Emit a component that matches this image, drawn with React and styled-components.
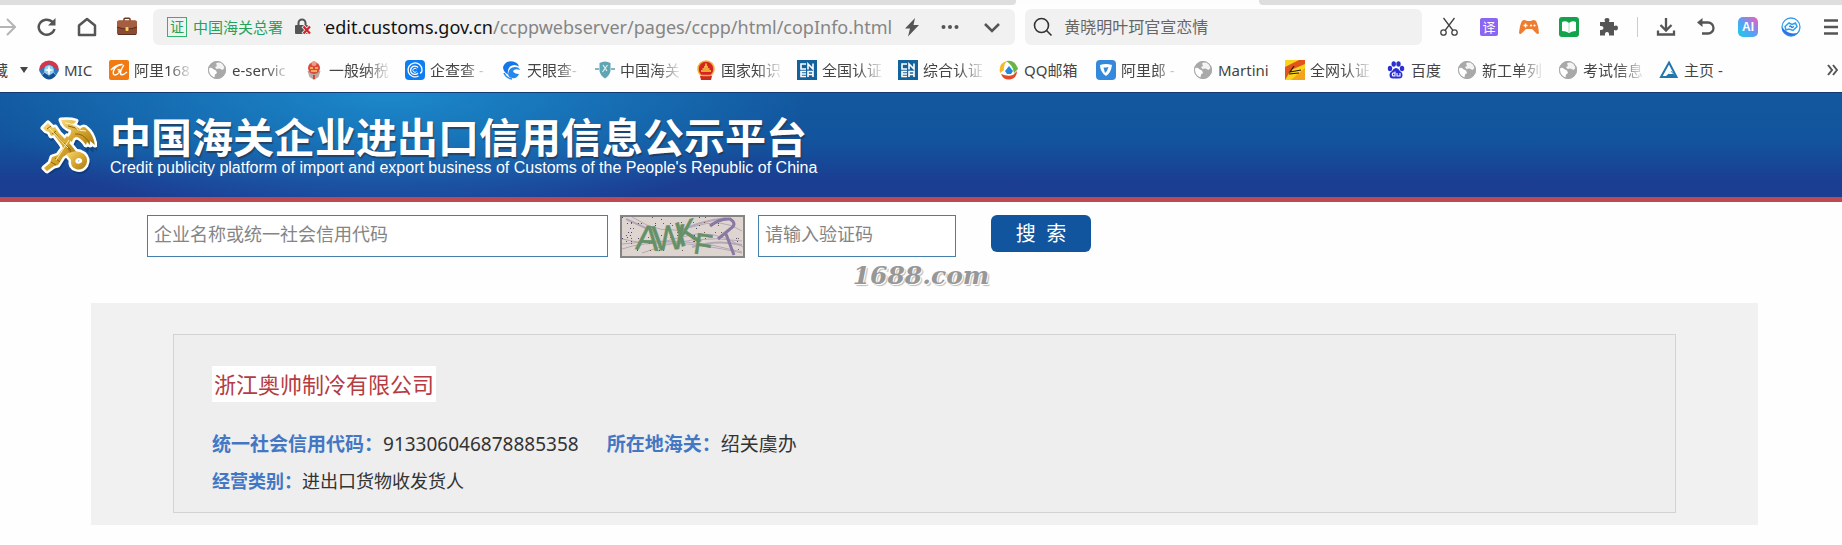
import React from "react";
import styled, { createGlobalStyle } from "styled-components";

const GlobalStyle = createGlobalStyle`
  * { box-sizing: border-box; }
  body {
    margin: 0;
    background: #fefefe;
    color: #333;
    font-family: "Noto Sans", "Noto Sans CJK SC", sans-serif;
    overflow-x: hidden;
  }
  svg { display: block; flex: none; }
`;

/* ---------- browser chrome ---------- */

const TabStrip = styled.div`
  display: flex;
  height: 5px;
  background: #fdfdfd;
`;
const TabEdge = styled.div`
  flex: ${(p) => p.$grow} 1 0;
  background: #dedede;
  border-radius: ${(p) => (p.$side === "left" ? "0 0 4px 0" : "0 0 0 4px")};
`;
const ActiveTab = styled.div`
  flex: 243 1 0;
`;

const Toolbar = styled.div`
  display: flex;
  align-items: center;
  height: 44px;
`;
const IconButton = styled.button`
  flex: none;
  display: flex;
  align-items: center;
  justify-content: ${(p) => p.$align || "center"};
  width: ${(p) => p.$width || 40}px;
  height: 36px;
  padding: 0;
  border: 0;
  background: none;
  color: #555;
`;
const Bar = styled.div`
  flex: ${(p) => p.$grow} 1 0;
  min-width: 0;
  display: flex;
  align-items: center;
  height: 36px;
  border-radius: 6px;
  background: #f1f1f1;
`;
const AddressBar = styled(Bar)`
  margin: 0 10px 0 6px;
  padding: 0 3px 0 14px;
`;
const SearchBar = styled(Bar)`
  margin-right: 7px;
  padding: 0 8px;
  gap: 11px;
`;
const CertBadge = styled.span`
  flex: none;
  width: 20px;
  height: 20px;
  border: 1px solid #2fb56c;
  color: #20a45c;
  font-size: 14px;
  line-height: 17px;
  text-align: center;
`;
const CertName = styled.span`
  flex: none;
  margin: 0 12px 0 6px;
  color: #20a45c;
  font-size: 15px;
  line-height: 20px;
`;
const Url = styled.div`
  flex: 1 1 0;
  min-width: 0;
  overflow: hidden;
  margin-left: 12px;
  color: #858585;
  font-size: 18px;
  line-height: 28px;
  white-space: nowrap;
`;
const UrlText = styled.span`
  margin-left: -6px;
`;
const UrlHost = styled.span`
  color: #111;
`;
const SearchInput = styled.input`
  flex: 1;
  min-width: 0;
  padding: 0;
  border: 0;
  outline: 0;
  background: none;
  font: 16px/24px "Noto Sans", "Noto Sans CJK SC", sans-serif;
  &::placeholder { color: #666; opacity: 1; }
`;
const Divider = styled.span`
  flex: none;
  width: 1px;
  height: 20px;
  margin: 0 8px;
  background: #ccc;
`;

const Bookmarks = styled.nav`
  display: flex;
  align-items: center;
  height: 43px;
  padding-bottom: 2px;
  overflow: hidden;
  font-size: 15px;
  line-height: 24px;
`;
const Folder = styled.button`
  flex: none;
  display: flex;
  align-items: center;
  justify-content: flex-end;
  gap: 12px;
  width: 39px;
  padding: 0 11px 0 0;
  border: 0;
  background: none;
  color: #444;
  font: inherit;
`;
const FolderName = styled.span`
  direction: rtl;
  width: 8px;
  overflow: hidden;
  white-space: nowrap;
`;
const Bookmark = styled.a`
  flex: none;
  display: flex;
  align-items: center;
  gap: 5px;
  margin-right: 16px;
  color: #444;
  text-decoration: none;
`;
const BookmarkName = styled.span`
  width: ${(p) => p.$width}px;
  overflow: hidden;
  white-space: nowrap;
  ${(p) => p.$fade && "mask-image: linear-gradient(to right, #000 60%, rgba(0,0,0,.1));"}
`;
const More = styled.button`
  margin-left: auto;
  padding: 0 4px;
  border: 0;
  background: none;
  color: #555;
`;

/* ---------- site ---------- */

const SiteHeader = styled.header`
  display: flex;
  align-items: center;
  gap: 13px;
  height: 110px;
  padding: 0 40px;
  border-top: 1px solid #123a73;
  border-bottom: 5px solid #bd4a50;
  background:
    radial-gradient(ellipse 420px 130px at 390px 0, rgba(29, 145, 210, .85), rgba(29, 145, 210, 0)),
    linear-gradient(#13589f 0, #12549d 45%, #1b3e92 85%, #1b3d92 100%);
`;
const Titles = styled.div`
  color: #fff;
  white-space: nowrap;
`;
const Title = styled.h1`
  margin: 0;
  font-size: 41px;
  line-height: 46px;
  font-weight: 700;
  text-shadow: 1px 2px 1px rgba(40, 50, 70, .7);
`;
const Subtitle = styled.p`
  margin: 0;
  font: 16px/16px "Liberation Sans", Arial, sans-serif;
`;

const SearchForm = styled.form`
  display: flex;
  align-items: flex-start;
  padding: 13px 147px 0;
`;
const Field = styled.input`
  flex: 0 1 ${(p) => p.$width}px;
  min-width: 0;
  height: 42px;
  padding: 0 6px 4px;
  border: 1px solid #4580ac;
  background: #fff;
  font: 18px/24px "Noto Sans", "Noto Sans CJK SC", sans-serif;
  &::placeholder { color: #858585; opacity: 1; }
`;
const CaptchaButton = styled.button`
  flex: none;
  margin: 0 13px 0 12px;
  padding: 0;
  border: 2px solid #858585;
  background: #e0d5cf;
`;
const SubmitButton = styled.button`
  flex: none;
  width: 100px;
  height: 37px;
  margin-left: 35px;
  padding: 0;
  border: 0;
  border-radius: 6px;
  background: #11559f;
  color: #fff;
  font: 20px/28px "Noto Sans", "Noto Sans CJK SC", sans-serif;
  white-space: pre;
`;
const Watermark = styled.p`
  margin: 0;
  padding-top: 2px;
  height: 45px;
  color: #979797;
  text-align: center;
  font: italic 700 25px/32px "DejaVu Serif", serif;
  text-shadow: 1px 1px 0 #fff, 2px 2px 1px #bbb;
`;

const Results = styled.main`
  margin: 0 84px 20px 91px;
  padding: 31px 82px 12px;
  background: #f1f1f1;
`;
const Card = styled.section`
  padding: 31px 38px 12px;
  border: 1px solid #d3d3d3;
  background: #eee;
`;
const Company = styled.h2`
  width: fit-content;
  margin: 0 0 24px;
  padding: 0 2px;
  background: #fff;
  color: #b43c43;
  font-size: 22px;
  line-height: 36px;
  font-weight: 400;
`;
const Facts = styled.dl`
  display: flex;
  gap: 28px;
  margin: 0;
  font-size: ${(p) => p.$size}px;
  line-height: 37px;
`;
const Fact = styled.div`
  display: flex;
`;
const Term = styled.dt`
  color: #4377c4;
  font-weight: 700;
`;
const Value = styled.dd`
  margin: 0;
`;

/* ---------- icons ---------- */

const Icon = ({ size = 20, children, ...rest }) => (
  <svg width={size} height={size} viewBox="0 0 20 20" fill="none" aria-hidden="true" {...rest}>
    {children}
  </svg>
);

const Briefcase = () => (
  <Icon>
    <path d="M7 4V2.200q0-1 1-1h4q1 0 1 1V4" stroke="#6b3a27" strokeWidth="1.500" />
    <rect y="3.500" width="20" height="14.500" rx="2" fill="#8b4a31" />
    <path d="M0 5.500q0-2 2-2h16q2 0 2 2V10q-10 4-20 0z" fill="#a65d40" />
    <path d="M0 10q10 4 20 0" stroke="#57301f" />
    <rect x="8.500" y="10" width="3" height="4" rx="1" fill="#f2d25c" />
    <path d="M1 17.500h18" stroke="#5b3020" />
  </Icon>
);
const LockBlocked = () => (
  <svg width="17" height="18" viewBox="0 0 17 18" fill="none" aria-hidden="true">
    <path d="M3.500 8V5a3.500 3.500 0 0 1 7 0v3" stroke="#555" strokeWidth="2" />
    <rect y="7" width="13" height="9" rx="1" fill="#555" />
    <path d="m8 8 7.500 8m0-8L8 16" stroke="#f1f1f1" strokeWidth="4" />
    <path d="m8.500 8.500 6.500 7m0-7-6.500 7" stroke="#d3242d" strokeWidth="2.200" />
  </svg>
);
const Globe = () => (
  <Icon>
    <circle cx="10" cy="10" r="9" fill="#a9a9a9" />
    <path d="M2 8q3-1 4 1l3 1.500 1 2.500-2 1.500-.5 3Q3 16 1.500 11z" fill="#fff" />
    <path d="M9 3.500q4-2.500 7 .5l1.500 4-2 2-3-1.500-3 .5-1.500-2 2-1z" fill="#f4f4f4" />
    <circle cx="10" cy="10" r="8.500" stroke="#a9a9a9" />
  </Icon>
);
const Mic = () => (
  <Icon>
    <path d="M0 10a10 9.500 0 0 1 20 0l-5 1a5 5 0 0 0-10 0z" fill="#d5374a" />
    <path d="M0 10.500 10 4l10 6.500-3 5-3-4.500-4-4-4 4-3 4.500z" fill="#2b78bf" />
    <path d="M3 15.500 6 12q4 5 8 0l3 3.500q-7 8-14 0z" fill="#174f93" />
    <circle cx="10" cy="10" r="4.800" fill="#8cd0f2" />
    <path d="m10 5 1 4 4 1-4 1-1 6-1-6-4-1 4-1z" fill="#fff" />
  </Icon>
);
const Alibaba = () => (
  <Icon>
    <rect width="20" height="20" rx="2" fill="#f17a12" />
    <path d="M2 10q4-5 11-5.500-7 1-8.500 6.500-1 4 1.500 4 4 0 8.500-9.500-4 7-2.500 9 2 1 6-2.500M8.500 9.500l2.500.5-1.500 2" stroke="#fff" strokeWidth="1.400" strokeLinejoin="round" />
  </Icon>
);
const Tax = () => (
  <Icon>
    <path d="M3.500 11h13l-2 6-4.500 3-4.500-3z" fill="#b8aaa2" />
    <circle cx="10" cy="8" r="6" fill="#df493b" />
    <circle cx="10" cy="3.500" r="2.500" fill="#e9a083" />
    <path d="M6 8h3m2 0h3M7 11h6" stroke="#f6cc6b" strokeWidth="1.500" />
    <path d="M10 15v4" stroke="#d1493d" strokeWidth="2" />
  </Icon>
);
const Qcc = () => (
  <Icon>
    <rect width="20" height="20" rx="4" fill="#0f7df2" />
    <path d="M13.500 16A7 7 0 1 1 17 10q0 3-2 3M13 13a4.200 4.200 0 1 1 0-5.500" stroke="#fff" strokeWidth="1.300" />
    <path d="M11.500 11.500a2 2 0 1 1 0-2.500" stroke="#fff" />
  </Icon>
);
const Tianyan = () => (
  <Icon>
    <path d="M1 7Q4 0 11 1.500q5 1 6 5-5-3-9 0-3 3-2 8Q1 12 1 7z" fill="#1676e8" />
    <path d="M6 14q1-7 7-7 4 0 5 3-5-2-7 1 1 3 6 3-2 5-7 4-4-1-4-4z" fill="#2488f0" />
    <path d="M2 13q2 5 8 6" stroke="#2a8ff2" strokeWidth="1.500" />
  </Icon>
);
const Customs = () => (
  <Icon>
    <path d="M0 9h4M16 9h4" stroke="#86b5c4" strokeWidth="2" />
    <path d="M4.500 3q5.500-3 11 0v8q-1 5-5.500 7.500Q5.500 16 4.500 11z" fill="#5ea6b4" />
    <path d="m8 5 4 6M12.500 5l-5 7" stroke="#e3f2f2" strokeWidth="1.200" />
  </Icon>
);
const Emblem = () => (
  <Icon>
    <circle cx="10" cy="9" r="8" fill="#d62323" stroke="#f0b23a" strokeWidth="1.500" />
    <path d="M5 11h10M6.500 9h7M8 7h4M10 3.500v3" stroke="#f8cf45" strokeWidth="1.500" />
    <path d="M4 16h12l-1 4H5z" fill="#ca2a20" />
    <path d="M6 15.500h8" stroke="#f0b23a" strokeWidth="1.500" />
  </Icon>
);
const Cnca = () => (
  <Icon>
    <rect width="20" height="20" fill="#14629b" />
    <path d="M9 4H4v5h5M11 9.500V4l5 5V3.500M9 11.500H4v5h5M4 14h5M11 17v-5.500h5V17M11 14.500h5" stroke="#fff" strokeWidth="1.600" />
  </Icon>
);
const QqMail = () => (
  <Icon>
    <path d="M1 13Q-1 3 8 1q-4 4-3 9z" fill="#f6b82b" />
    <path d="M7 1q9-2 12 8l-4 4Q14 5 7 1z" fill="#68b544" />
    <path d="M2 14q7 3 12 1l4-4q0 7-7 8.500Q4 20 2 14z" fill="#e44a27" />
    <path d="m10 6 4 5-2 3H8l-2-3z" fill="#2489dc" />
  </Icon>
);
const Alilang = () => (
  <Icon>
    <rect width="20" height="20" rx="4" fill="#3589dd" />
    <path d="M4 5q6-2 12 0-1 8-6 11-6-4-6-11z" fill="#fff" />
    <path d="M7.500 7.500q3 0 5-.5-1 4-3.500 6z" fill="#3589dd" />
  </Icon>
);
const Quanwang = () => (
  <Icon>
    <rect width="20" height="20" fill="#f8d51c" />
    <path d="M0 20V7L14 0h6v4L6 10z" fill="#e2531d" />
    <path d="M20 8v12H6z" fill="#f3a41a" />
    <path d="m9 6-4 6 11-2M4 14l10-1" stroke="#2a1a12" strokeWidth="1.200" />
  </Icon>
);
const Baidu = () => (
  <Icon fill="#2a2fd0">
    <ellipse cx="4" cy="8.500" rx="2.200" ry="2.800" />
    <ellipse cx="7.700" cy="4" rx="2.200" ry="2.800" />
    <ellipse cx="12.500" cy="4" rx="2.200" ry="2.800" />
    <ellipse cx="16" cy="8.500" rx="2.200" ry="2.800" />
    <path d="M10 8q2.500 0 3.500 2.500 3 2 3 4.500 0 3.500-3.500 3.500H7Q3.500 18.500 3.500 15q0-2.500 3-4.500Q7.500 8 10 8z" />
    <path d="M9 11.500V16H7q-1.500-1.500 0-3h2M11 13v3h3v-3" stroke="#fff" fill="none" strokeWidth="1.100" />
  </Icon>
);
const Triangle = () => (
  <Icon>
    <path d="M10 2.500 17.500 17H2z" stroke="#2276ae" strokeWidth="2" />
    <path d="m6 17 6.500-6L17 17z" fill="#2276ae" />
    <path d="m9 14 3-2.500 2 2.500z" fill="#fff" />
  </Icon>
);

const bookmarks = [
  { name: "MIC", icon: Mic, width: 29 },
  { name: "阿里168", icon: Alibaba, width: 57, fade: true },
  { name: "e-servic", icon: Globe, width: 56, fade: true },
  { name: "一般纳税", icon: Tax, width: 60, fade: true },
  { name: "企查查 -", icon: Qcc, width: 56, fade: true },
  { name: "天眼查-", icon: Tianyan, width: 52, fade: true },
  { name: "中国海关", icon: Customs, width: 60, fade: true },
  { name: "国家知识", icon: Emblem, width: 60, fade: true },
  { name: "全国认证", icon: Cnca, width: 60, fade: true },
  { name: "综合认证", icon: Cnca, width: 60, fade: true },
  { name: "QQ邮箱", icon: QqMail, width: 56 },
  { name: "阿里郎 -", icon: Alilang, width: 56, fade: true },
  { name: "Martini", icon: Globe, width: 51 },
  { name: "全网认证", icon: Quanwang, width: 60, fade: true },
  { name: "百度", icon: Baidu, width: 30 },
  { name: "新工单列", icon: Globe, width: 60, fade: true },
  { name: "考试信息", icon: Globe, width: 60, fade: true },
  { name: "主页 -", icon: Triangle, width: 42 },
];

const CustomsKeys = () => (
  <svg width="57" height="57" viewBox="0 0 57 57" fill="none" aria-hidden="true">
    <defs>
      <linearGradient id="gold" x1="0" y1="0" x2="1" y2="1">
        <stop offset="0" stopColor="#f3d97c" />
        <stop offset=".5" stopColor="#d9a92f" />
        <stop offset="1" stopColor="#a87812" />
      </linearGradient>
      <g id="keys">
        <path d="M3 11 8 6l5 5 2-1 4 6 12 12 7 9-4 4-10-10-10-13-3 1-2-4-3-1z" />
        <path d="M21 3q9-1 15 1-1 3-5 3 4 1 9 5 4-4 7 0 6 5 8 16l-5-4 0 4-3-3-1 3q-4-6-9-8-4 0-5 5l-5-4q5-4 4-8-8-2-10-10z" />
        <path d="m27 19 4 4-4 8 2 5-6 4-5 8-4 1-7 5-3-3 6-5 2-6 6-2 5-7-2-5z" />
        <path d="M32 35q6-2 12 2 5 5 2 11-4 6-10 4-6-2-5-9l-5-6zM38 41q-4 2-2 5 3 2 6-1 1-4-4-4z" fillRule="evenodd" />
      </g>
    </defs>
    <use href="#keys" transform="translate(1 2)" fill="#0b2f66" stroke="#0b2f66" strokeWidth="5" opacity=".5" />
    <use href="#keys" fill="#fff" stroke="#fff" strokeWidth="5" strokeLinejoin="round" />
    <use href="#keys" fill="url(#gold)" />
    <path d="m7 12 4-3M12 17l4-3M14 15l17 20M28 9q8 1 12 5M35 17q8-1 14 8M15 41l5 4M11 45l5 3M24 26l7 7" stroke="#8f6410" strokeWidth="1" />
    <path d="m9 11 19 20M25 6q9 0 13 7l8 1M29 23 16 43" stroke="#fff2b5" strokeWidth="1" />
  </svg>
);

const specks = Array.from({ length: 70 }, (_, i) => [(i * i * 17 + i * 31) % 121, (i * i * 7 + i * 13) % 39]);

const Captcha = () => (
  <svg width="121" height="39" viewBox="0 0 121 39" role="img" aria-label="验证码图片">
    <rect width="121" height="39" fill="#dfd5d0" />
    <g stroke="#a294ad" fill="none" opacity=".7">
      <path d="M0 22q30 8 60-2t61 10M0 32q40-14 120 4M10 0q30 20 60 10t50 4M0 27q60-9 120 8M20 36q50-20 100-12" />
      <path d="M58 14q20-10 46-13M70 30q25-8 50-2M4 2l22 10" strokeWidth="2" />
    </g>
    {specks.map(([x, y], i) => (
      <rect key={i} x={x} y={y} width="1" height="1" fill={i % 2 ? "#7c5757" : "#4f4a68"} />
    ))}
    <g fill="#659068" stroke="#659068" strokeWidth=".5" fontFamily="Liberation Sans, Arial, sans-serif" fontSize="35">
      <text x="14" y="33" transform="rotate(5 26 22)">A</text>
      <text x="30" y="33" transform="rotate(-4 42 20)">W</text>
      <text x="54" y="28" transform="rotate(-16 64 18)">K</text>
      <text x="72" y="38" transform="rotate(9 82 28)" fontSize="30">F</text>
    </g>
    <path d="M88 9q10-8 20-7 8 5 0 10L96 22M104 17l8 21" stroke="#8878a2" strokeWidth="3" fill="none" />
  </svg>
);

export default function App() {
  return (
    <>
      <GlobalStyle />
      <TabStrip>
        <TabEdge $grow={1016} $side="left" />
        <ActiveTab />
        <TabEdge $grow={583} $side="right" />
      </TabStrip>

      <Toolbar>
        <IconButton $width={27} $align="flex-start" aria-label="前进">
          <Icon width={16} viewBox="4 0 16 20"><path d="M0 10h18M11 2l8 8-8 8" stroke="#b5b5b5" strokeWidth="2" /></Icon>
        </IconButton>
        <IconButton aria-label="刷新">
          <Icon><path d="M17.500 12a8 7.500 0 1 1-2.500-7.500L17 6.500" stroke="currentColor" strokeWidth="2.500" /><path d="M18.500 1v7.500H11z" fill="currentColor" /></Icon>
        </IconButton>
        <IconButton aria-label="主页">
          <Icon><path d="M2 8.500 10 2l8 6.500V18H2z" stroke="currentColor" strokeWidth="2.500" strokeLinejoin="round" /></Icon>
        </IconButton>
        <IconButton aria-label="工具箱"><Briefcase /></IconButton>

        <AddressBar $grow={868}>
          <CertBadge>证</CertBadge>
          <CertName>中国海关总署</CertName>
          <LockBlocked />
          <Url>
            <UrlText><UrlHost>redit.customs.gov.cn</UrlHost>/ccppwebserver/pages/ccpp/html/copInfo.html</UrlText>
          </Url>
          <IconButton $width={32} aria-label="极速模式">
            <Icon><path d="M13 1 3 11.500h5L6 19.500 17 8h-5.500z" fill="currentColor" /></Icon>
          </IconButton>
          <IconButton $width={44} aria-label="更多">
            <Icon fill="currentColor"><circle cx="3.500" cy="10" r="2" /><circle cx="10" cy="10" r="2" /><circle cx="16.500" cy="10" r="2" /></Icon>
          </IconButton>
          <IconButton aria-label="展开">
            <Icon><path d="m3 7 7 7 7-7" stroke="currentColor" strokeWidth="2.500" /></Icon>
          </IconButton>
        </AddressBar>

        <SearchBar $grow={391}>
          <Icon><circle cx="8.500" cy="8.500" r="7" stroke="#333" strokeWidth="1.600" /><path d="m13.500 13.500 5 5" stroke="#333" strokeWidth="1.600" /></Icon>
          <SearchInput aria-label="搜索" placeholder="黄晓明叶珂官宣恋情" />
        </SearchBar>

        <IconButton aria-label="截图">
          <Icon stroke="#444" strokeWidth="1.300"><circle cx="4.500" cy="15.500" r="2.700" /><circle cx="15.500" cy="15.500" r="2.700" /><path d="M4.500 1 14 13.500M15.500 1 6 13.500" /></Icon>
        </IconButton>
        <IconButton aria-label="翻译">
          <Icon><rect x="1" y="1" width="18" height="18" rx="2" fill="#8b66f2" /><text x="10" y="15" textAnchor="middle" fontSize="13" fill="#fff" fontFamily="Noto Sans CJK SC, sans-serif">译</text></Icon>
        </IconButton>
        <IconButton aria-label="游戏">
          <Icon><path d="M3 4q2-2 5 0h4q3-2 5 0 2 3 3 12-1 2-3 0l-4-4H7l-4 4q-2 2-3 0Q1 7 3 4z" fill="#ef7d31" /><path d="M4.500 8.500h4m-2-2v4" stroke="#fff" strokeWidth="1.300" /><circle cx="12" cy="8.500" r="1.100" fill="#fff" /><circle cx="15.500" cy="8.500" r="1.100" fill="#fff" /></Icon>
        </IconButton>
        <IconButton aria-label="小说">
          <Icon><rect width="20" height="20" rx="3" fill="#14a34d" /><path d="M3 5q4-2 7 1 3-3 7-1v9q-4 0-7 2-3-2-7-2z" fill="#fff" /><path d="M10 6v9" stroke="#a7dfba" /></Icon>
        </IconButton>
        <IconButton aria-label="扩展">
          <Icon><path d="M1 5h5q-1.500-4 2-4t2 4h5v4q4-1.500 4 2t-4 2v5.500h-5q.5-3.500-2-3.500t-2 3.500H1V13q3.500.5 3.500-2T1 9z" fill="currentColor" /></Icon>
        </IconButton>
        <Divider />
        <IconButton aria-label="下载">
          <Icon stroke="currentColor" strokeWidth="2.300"><path d="M10 1v12M4.500 8l5.500 5.500L15.500 8M2 13.500v4h16v-4" /></Icon>
        </IconButton>
        <IconButton aria-label="恢复">
          <Icon><path d="M4 5.500h8a5.500 5.500 0 0 1 0 11H6" stroke="currentColor" strokeWidth="2.300" /><path d="M1 5.500 6.500 1v9z" fill="currentColor" /></Icon>
        </IconButton>
        <IconButton $width={43} aria-label="AI">
          <Icon>
            <defs><linearGradient id="ai" x1="0" y1="1" x2="1" y2="0"><stop offset="0" stopColor="#14cfe8" /><stop offset=".5" stopColor="#5e9cf5" /><stop offset="1" stopColor="#ff55bd" /></linearGradient></defs>
            <rect width="20" height="20" rx="5" fill="url(#ai)" />
            <text x="10" y="14" textAnchor="middle" fontSize="12" fontWeight="700" fill="#fff" fontFamily="Liberation Sans, sans-serif">AI</text>
          </Icon>
        </IconButton>
        <IconButton $width={43} aria-label="助手">
          <Icon><circle cx="10" cy="10" r="9" stroke="#3a9bea" strokeWidth="1.300" /><path d="M1 10a9 9 0 0 0 16 5.500Q8 19 1 10z" fill="#2e72e8" /><path d="m4 9.500 4-3.500 3 1.500L14.500 6l1.500 3.500-4 4-4-1.500-3 1z" stroke="#2da3ea" strokeWidth="1.500" /><path d="m8 9.500 1.500-.5 1.500 1.500 2-1" stroke="#246de0" strokeWidth="1.200" /></Icon>
        </IconButton>
        <IconButton $width={30} $align="flex-end" aria-label="菜单">
          <Icon width={18} viewBox="2 0 18 20"><path d="M2 3.500h14M2 10h14M2 16.500h14" stroke="currentColor" strokeWidth="2.300" /></Icon>
        </IconButton>
      </Toolbar>

      <Bookmarks aria-label="收藏夹">
        <Folder>
          <FolderName>藏</FolderName>
          <svg width="8" height="6" aria-hidden="true"><path d="M0 0h8L4 6z" fill="#444" /></svg>
        </Folder>
        {bookmarks.map(({ name, icon: Glyph, width, fade }) => (
          <Bookmark key={name} href="#">
            <Glyph />
            <BookmarkName $width={width} $fade={fade}>{name}</BookmarkName>
          </Bookmark>
        ))}
        <More aria-label="更多收藏">
          <svg width="11" height="12" fill="none"><path d="m1 1 4 5-4 5M6 1l4 5-4 5" stroke="currentColor" strokeWidth="2" /></svg>
        </More>
      </Bookmarks>

      <SiteHeader>
        <CustomsKeys />
        <Titles>
          <Title>中国海关企业进出口信用信息公示平台</Title>
          <Subtitle>Credit publicity platform of import and export business of Customs of the People's Republic of China</Subtitle>
        </Titles>
      </SiteHeader>

      <SearchForm onSubmit={(e) => e.preventDefault()}>
        <Field $width={461} aria-label="企业名称或统一社会信用代码" placeholder="企业名称或统一社会信用代码" />
        <CaptchaButton type="button" aria-label="刷新验证码"><Captcha /></CaptchaButton>
        <Field $width={198} aria-label="验证码" placeholder="请输入验证码" />
        <SubmitButton type="submit">搜  索</SubmitButton>
      </SearchForm>
      <Watermark>1688.com</Watermark>

      <Results>
        <Card>
          <Company>浙江奥帅制冷有限公司</Company>
          <Facts $size={19}>
            <Fact><Term>统一社会信用代码：</Term><Value>913306046878885358</Value></Fact>
            <Fact><Term>所在地海关：</Term><Value>绍关虞办</Value></Fact>
          </Facts>
          <Facts $size={18}>
            <Fact><Term>经营类别：</Term><Value>进出口货物收发货人</Value></Fact>
          </Facts>
        </Card>
      </Results>
    </>
  );
}
